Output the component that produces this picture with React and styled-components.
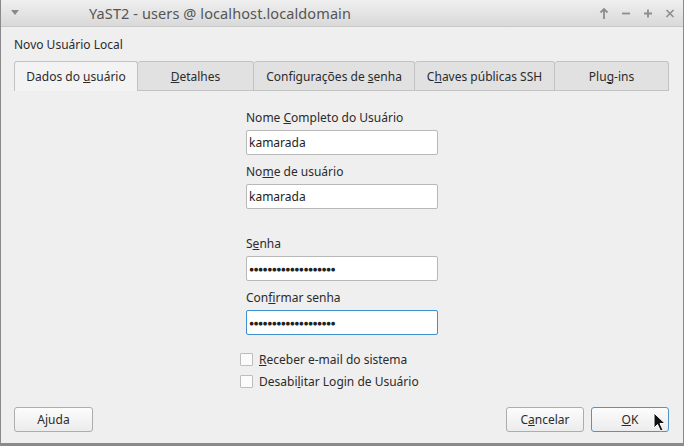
import React from "react";
import styled, { createGlobalStyle } from "styled-components";

const GlobalStyle = createGlobalStyle`
  html, body {
    margin: 0;
    padding: 0;
    background: #efefef;
  }
  body {
    font-family: "Noto Sans", "Open Sans", sans-serif;
    font-size: 12px;
    color: #2b2b2b;
  }
`;

const Window = styled.div`
  position: relative;
  width: 684px;
  height: 446px;
  box-sizing: border-box;
  display: flex;
  flex-direction: column;
  background: #efefef;
  border-left: 1px solid #8a8a8a;
  border-right: 1px solid #8a8a8a;
  border-bottom: 3px solid #8a8a8a;
`;

const TitleBar = styled.div`
  height: 27px;
  flex: none;
  display: flex;
  align-items: center;
  padding: 0 8px 0 10px;
  background: linear-gradient(#efefef, #d9d9d9);
  border-bottom: 1px solid #c8c8c8;
  box-sizing: border-box;
`;

const TitleText = styled.div`
  flex: 1;
  margin-left: 70px;
  font-size: 14.5px;
  color: #555;
  letter-spacing: 0.1px;
`;

const TitleButtons = styled.div`
  display: flex;
  gap: 12px;
`;

const Content = styled.div`
  flex: 1;
  display: flex;
  flex-direction: column;
  padding: 9px 14px 0 13px;
`;

const Heading = styled.div`
  height: 17px;
  line-height: 17px;
`;

const TabBar = styled.div`
  display: flex;
  margin-top: 8px;
  height: 30px;
`;

const Tab = styled.div`
  width: ${(p) => p.w}px;
  box-sizing: border-box;
  display: flex;
  align-items: center;
  justify-content: center;
  border: 1px solid #c2c2c2;
  border-left-width: ${(p) => (p.first ? 1 : 0)}px;
  border-bottom: ${(p) => (p.active ? "none" : "1px solid #c2c2c2")};
  border-radius: 3px 3px 0 0;
  background: ${(p) => (p.active ? "#f3f3f3" : "#e1e1e1")};
  ${(p) => (p.active ? "padding-bottom: 1px;" : "")}
`;

const Form = styled.div`
  align-self: flex-start;
  margin-left: 232px;
  margin-top: 18px;
  width: 192px;
  display: flex;
  flex-direction: column;
`;

const Label = styled.div`
  height: 17px;
  line-height: 17px;
  margin-top: ${(p) => p.mt || 0}px;
  margin-bottom: 4px;
`;

const Input = styled.div`
  height: 25px;
  box-sizing: border-box;
  border: 1px solid ${(p) => (p.focused ? "#3e8fcc" : "#b8b8b8")};
  border-radius: 2px;
  background: #fff;
  display: flex;
  align-items: center;
  padding-left: 2px;
  color: #1e1e1e;
`;

const Dots = styled.span`
  font-size: 8.5px;
  letter-spacing: -0.6px;
  color: #222;
`;

const Checks = styled.div`
  margin-left: 226px;
  margin-top: 16px;
  display: flex;
  flex-direction: column;
  gap: 6px;
`;

const CheckRow = styled.div`
  display: flex;
  align-items: center;
  height: 16px;
  gap: 6px;
`;

const Box = styled.span`
  width: 13px;
  height: 13px;
  box-sizing: border-box;
  border: 1px solid #bdbdbd;
  background: #fbfbfb;
  border-radius: 1px;
`;

const Footer = styled.div`
  margin-top: auto;
  margin-bottom: 11px;
  display: flex;
  align-items: center;
`;

const Button = styled.div`
  width: ${(p) => p.w}px;
  height: 25px;
  box-sizing: border-box;
  display: flex;
  align-items: center;
  justify-content: center;
  border: 1px solid ${(p) => (p.def ? "#4f95c9" : "#adadad")};
  border-radius: 3px;
  background: linear-gradient(#fcfcfc, #ececec);
  margin-left: ${(p) => p.ml || 0}px;
`;

const Cursor = styled.svg`
  position: absolute;
  left: 652px;
  top: 412px;
`;

const u = (s) => <u>{s}</u>;

export default function App() {
  return (
    <>
      <GlobalStyle />
      <Window>
        <TitleBar>
          <svg width="8" height="6" viewBox="0 0 8 6">
            <path d="M0 0 H8 L4 5 Z" fill="#8a8a8a" />
          </svg>
          <TitleText>YaST2 - users @ localhost.localdomain</TitleText>
          <TitleButtons>
            <svg width="10" height="11" viewBox="0 0 10 11">
              <path d="M5 1 V11 M1.5 4.5 L5 1 L8.5 4.5" stroke="#8d8d8d" strokeWidth="1.8" fill="none" />
            </svg>
            <svg width="10" height="11" viewBox="0 0 10 11">
              <path d="M1 5.5 H9" stroke="#8d8d8d" strokeWidth="1.8" />
            </svg>
            <svg width="10" height="11" viewBox="0 0 10 11">
              <path d="M1 5.5 H9 M5 1.5 V9.5" stroke="#8d8d8d" strokeWidth="1.8" />
            </svg>
            <svg width="10" height="11" viewBox="0 0 10 11">
              <path d="M1.5 2 L8.5 9 M8.5 2 L1.5 9" stroke="#8d8d8d" strokeWidth="1.6" />
            </svg>
          </TitleButtons>
        </TitleBar>
        <Content>
          <Heading>Novo Usuário Local</Heading>
          <TabBar>
            <Tab w={124} first active>
              <span>Dados do {u("u")}suário</span>
            </Tab>
            <Tab w={116}>
              <span>{u("D")}etalhes</span>
            </Tab>
            <Tab w={161}>
              <span>Configurações de {u("s")}enha</span>
            </Tab>
            <Tab w={140}>
              <span>C{u("h")}aves públicas SSH</span>
            </Tab>
            <Tab w={114}>
              <span>Plu{u("g")}-ins</span>
            </Tab>
          </TabBar>
          <Form>
            <Label>Nome {u("C")}ompleto do Usuário</Label>
            <Input>kamarada</Input>
            <Label mt={8}>No{u("m")}e de usuário</Label>
            <Input>kamarada</Input>
            <Label mt={26}>S{u("e")}nha</Label>
            <Input>
              <Dots>{"●".repeat(19)}</Dots>
            </Input>
            <Label mt={8}>Con{u("f")}irmar senha</Label>
            <Input focused>
              <Dots>{"●".repeat(19)}</Dots>
            </Input>
          </Form>
          <Checks>
            <CheckRow>
              <Box />
              <span>{u("R")}eceber e-mail do sistema</span>
            </CheckRow>
            <CheckRow>
              <Box />
              <span>Desabi{u("l")}itar Login de Usuário</span>
            </CheckRow>
          </Checks>
          <Footer>
            <Button w={79}>Ajuda</Button>
            <Button w={78} ml={413}>
              <span>C{u("a")}ncelar</span>
            </Button>
            <Button w={78} ml={7} def>
              <span>{u("O")}K</span>
            </Button>
          </Footer>
        </Content>
        <Cursor width="14" height="20" viewBox="0 0 14 20">
          <path d="M1 1 L1 16 L4.5 12.5 L7.5 19 L10 18 L7 11.5 L12 11.5 Z" fill="#111" stroke="#fff" strokeWidth="1" />
        </Cursor>
      </Window>
    </>
  );
}
